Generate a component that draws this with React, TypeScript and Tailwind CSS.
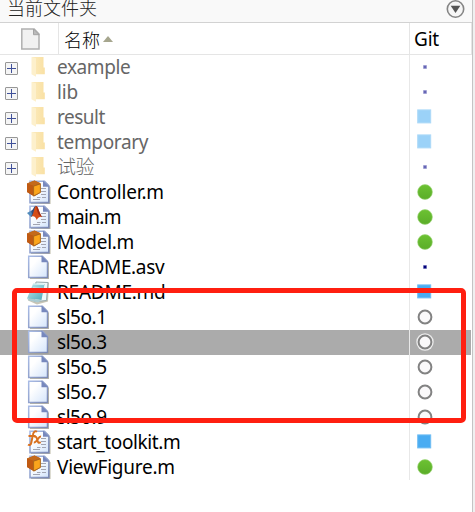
import React from 'react';

type Kind = 'folder' | 'class' | 'matlab' | 'blank' | 'note' | 'fx';
type Git = 'dot' | 'square' | 'green' | 'ring';
type Row = { name: string; kind: Kind; git: Git; tracking: string; selected?: boolean };

const rows: Row[] = [
  { name: 'example', kind: 'folder', git: 'dot', tracking: 'tracking-[-0.4px]' },
  { name: 'lib', kind: 'folder', git: 'dot', tracking: 'tracking-[-0.1px]' },
  { name: 'result', kind: 'folder', git: 'square', tracking: 'tracking-[-0.5px]' },
  { name: 'temporary', kind: 'folder', git: 'square', tracking: 'tracking-[-0.35px]' },
  { name: '试验', kind: 'folder', git: 'dot', tracking: 'tracking-[-0.5px] font-light' },
  { name: 'Controller.m', kind: 'class', git: 'green', tracking: 'tracking-[-0.2px]' },
  { name: 'main.m', kind: 'matlab', git: 'green', tracking: 'tracking-[-0.7px]' },
  { name: 'Model.m', kind: 'class', git: 'green', tracking: 'tracking-[-0.25px]' },
  { name: 'README.asv', kind: 'blank', git: 'dot', tracking: 'tracking-[-0.35px]' },
  { name: 'README.md', kind: 'note', git: 'square', tracking: 'tracking-[-0.25px]' },
  { name: 'sl5o.1', kind: 'blank', git: 'ring', tracking: 'tracking-[-0.45px]' },
  { name: 'sl5o.3', kind: 'blank', git: 'ring', tracking: 'tracking-[-0.45px]', selected: true },
  { name: 'sl5o.5', kind: 'blank', git: 'ring', tracking: 'tracking-[-0.45px]' },
  { name: 'sl5o.7', kind: 'blank', git: 'ring', tracking: 'tracking-[-0.45px]' },
  { name: 'sl5o.9', kind: 'blank', git: 'ring', tracking: 'tracking-[-0.45px]' },
  { name: 'start_toolkit.m', kind: 'fx', git: 'square', tracking: 'tracking-[-0.4px]' },
  { name: 'ViewFigure.m', kind: 'class', git: 'green', tracking: 'tracking-[-0.25px]' },
];

function Defs() {
  return (
    <svg width="0" height="0" className="absolute">
      <defs>
        <linearGradient id="paper" x1="0" y1="0" x2="1" y2="1">
          <stop offset="0.3" stopColor="#fff" />
          <stop offset="1" stopColor="#d3e4fb" />
        </linearGradient>
        <linearGradient id="edge" x1="0" y1="0" x2="1" y2="1">
          <stop offset="0" stopColor="#a9bce6" />
          <stop offset="1" stopColor="#7a88b4" />
        </linearGradient>
        <linearGradient id="fold" x1="0" y1="0" x2="1" y2="0">
          <stop offset="0" stopColor="#fcebbd" />
          <stop offset="1" stopColor="#f9e0a3" />
        </linearGradient>
        <linearGradient id="pad" x1="0" y1="0" x2="1" y2="1">
          <stop offset="0" stopColor="#c5e9ee" />
          <stop offset="1" stopColor="#4ba6b8" />
        </linearGradient>
        <linearGradient id="leaf" x1="0" y1="0" x2="0" y2="1">
          <stop offset="0" stopColor="#6cc232" />
          <stop offset="1" stopColor="#5bad29" />
        </linearGradient>
      </defs>
    </svg>
  );
}

function Page() {
  return (
    <>
      <path d="M3 3h15l4 5v16H3z" fill="#aaa68f" opacity=".8" />
      <path d="M1.7 1.2h13.8l5 5.3v16.1H1.7z" fill="url(#paper)" stroke="url(#edge)" strokeWidth="1.5" />
      <path d="M14.5 .5v6.7h6.7z" fill="#7788bd" />
    </>
  );
}

function Code() {
  return (
    <>
      <path d="M4 3h16l3.5 4.5V24H4z" fill="#aaa68f" opacity=".8" />
      <path d="M3 1.2h14.5l4.3 4.6v16.8H3z" fill="url(#paper)" stroke="url(#edge)" strokeWidth="1.6" />
      <path d="M16 .5v6.2h6.4z" fill="#7788bd" />
      <path d="M14 8.5h5M14 11.5h5M14 14.5h5M10 17.5h3.5M15 17.5h4M6 19.5h7" stroke="#a2a5b2" strokeWidth="1.2" />
    </>
  );
}

function FileIcon({ kind }: { kind: Kind }) {
  return (
    <svg width="25" height="25" viewBox="0 0 25 25" className="shrink-0">
      {kind === 'folder' && (
        <>
          <path d="M5 2h11.5v10.5h1.3v6.8H7z" fill="url(#fold)" />
          <path d="M4.5 2 9 3.3v18.4l-4.5-2.5z" fill="#fdf0cc" />
        </>
      )}
      {kind === 'blank' && <Page />}
      {kind === 'class' && (
        <>
          <Code />
          <path d="m0 3.5 7.5-3 6 2.7v9.5L7 16.5 0 12z" fill="#b65b16" />
          <path d="m0 3.5 7.5-3 6 2.7L6.5 6z" fill="#c46a1c" />
          <path d="M0 3.5 6.5 6v9.7L0 12z" fill="#c05a12" />
          <path d="m6.6 6.2 6.8-2.3v8.5l-6.8 3.6z" fill="#fba51c" stroke="#a4641c" strokeWidth=".8" />
        </>
      )}
      {kind === 'matlab' && (
        <>
          <Code />
          <path d="m0 8 4-2.3L7.5 9 4 12z" fill="#528bbb" />
          <path d="M4 5.8c2 0 3-5 5-5l-1.7 9L4 12l1-3z" fill="#344e7c" />
          <path d="M4.2 11.7C7 9.5 7 1.3 9.2 1c2 0 3 7.5 6 11-2-.7-4 .3-5.5 3C8.7 12 7 10.6 4.2 11.7z" fill="#d64d16" />
          <path d="M9.2 1c2 0 3 7.5 6 11-4-1.5-5-5-6-11z" fill="#9e2b15" />
        </>
      )}
      {kind === 'fx' && (
        <>
          <Code />
          <path d="M10 1.8C8 .4 6.4 2 6 4.5L4.3 12.5c-.5 2.6-1.8 3-3.3 2.2M1.5 6h7" fill="none" stroke="#d8701f" strokeWidth="2" />
          <path d="M7 6.8c2-1 2.7.7 3.3 3 .5 2.4 1.2 3.8 3.4 2.4M14 6.5c-2.6-.4-4 6.3-7.2 6" fill="none" stroke="#d8701f" strokeWidth="2" />
        </>
      )}
      {kind === 'note' && (
        <>
          <path d="m9 2 13 .5-1 19-11 3-9-4z" fill="#aaa68f" opacity=".65" />
          <path d="m9 2 12 .5-1.5 18-12 1.2z" fill="#eef8fa" stroke="#94a9ae" />
          <path d="M6.2 3.5 17.6 4 14.5 20 0 18.5z" fill="url(#pad)" />
          <path d="m6 4 11 .4M6 8l10.5.4" stroke="#e3fafa" />
          <path d="m0 18.5 14.5 1.5-3.3 2.5-9.4-2z" fill="#a9cbd1" />
        </>
      )}
    </svg>
  );
}

function Expander() {
  return (
    <svg width="13" height="13" viewBox="0 0 13 13" className="mt-[7px] block shrink-0">
      <rect x=".5" y=".5" width="12" height="12" rx=".5" fill="#f5f5f5" stroke="#979797" />
      <path d="M2 6h9v1H2zM6 2h1v9H6z" fill="#3f5099" />
    </svg>
  );
}

function GitMark({ git, light, selected }: { git: Git; light: boolean; selected?: boolean }) {
  return (
    <svg width="18" height="25" viewBox="0 0 18 25" className="shrink-0">
      {git === 'dot' && (
        <>
          <rect x="7" y="10" width="4" height="4" fill={light ? '#c5c5e7' : '#b0b0dd'} />
          <rect x="7.6" y="10.6" width="2.8" height="2.8" fill={light ? '#6666b5' : '#000078'} />
        </>
      )}
      {git === 'square' && (
        <rect x="1.7" y="4.9" width="13" height="13" fill={light ? '#9bd2f8' : '#49acf2'} stroke={light ? '#add9f8' : '#70bdf3'} />
      )}
      {git === 'green' && <circle cx="9" cy="12" r="7.4" fill="url(#leaf)" stroke="#a0d67c" strokeWidth=".6" />}
      {git === 'ring' && (
        <>
          {selected && <circle cx="9" cy="12" r="8.7" fill="#ededed" />}
          <circle cx="9" cy="12" r="6.4" fill="#faf9fa" stroke="#828282" strokeWidth="2" />
        </>
      )}
    </svg>
  );
}

export default function App() {
  return (
    <div className="relative flex h-[512px] w-[475px] overflow-hidden bg-white font-['Noto_Sans','Noto_Sans_CJK_SC',sans-serif] text-[19px] text-black">
      <Defs />
      <div className="flex w-[472px] shrink-0 flex-col">
        <header className="flex h-[23px] shrink-0 items-start border-b border-[#d2d2d2] bg-[#f9f9f9] pl-[7px] pr-[7px]">
          <span className="font-['Noto_Sans_CJK_SC',sans-serif] text-[18px] font-light leading-[14px] text-[#222]">当前文件夹</span>
          <svg width="19" height="19" viewBox="0 0 19 19" className="ml-auto">
            <circle cx="9.5" cy="9" r="8.2" fill="#f6f6f6" stroke="#858585" strokeWidth="1.6" />
            <path d="M4.7 5.8h9.6L9.5 13z" fill="#555" />
          </svg>
        </header>
        <div className="flex h-8 shrink-0 border-b border-[#e5e5e5]">
          <div className="flex w-[59px] items-center border-r border-[#e5e5e5] pl-[21px]">
            <svg width="19" height="22" viewBox="0 0 19 22">
              <path d="M.8 1h12.4l4.8 5v15H.8z" fill="#f1f1f1" stroke="#b0b0b0" strokeWidth="1.5" />
              <path d="M12.5 1v5.7h5.6z" fill="#bbb" stroke="#a3a3a3" />
            </svg>
          </div>
          <div className="flex flex-1 items-center pl-[5px]">
            <span className="font-['Noto_Sans_CJK_SC',sans-serif] text-[18px] font-light leading-7 text-black">名称</span>
            <svg width="10" height="6" viewBox="0 0 10 6" className="ml-[3px]"><path d="M0 6 5 0l5 6z" fill="#a6a68e" /></svg>
          </div>
          <div className="flex w-[63px] items-center border-l border-r border-[#e5e5e5] pl-1 pt-[2px]">
            <span className="tracking-[-0.2px]">Git</span>
          </div>
        </div>
        <main className="flex flex-col">
          {rows.map((r) => {
            const folder = r.kind === 'folder';
            return (
              <div key={r.name} className={`flex h-[25px] w-[471px] ${r.selected ? 'bg-[#ababab]' : ''}`}>
                <div className="flex w-[27px] items-start pl-[5px]">{folder && <Expander />}</div>
                <FileIcon kind={r.kind} />
                <div className={`flex-1 whitespace-nowrap pl-[5px] leading-[25px] ${r.tracking} ${folder ? 'text-[#666]' : 'text-black'}`}>{r.name}</div>
                <div className="flex w-[62px] border-l border-[#e8e8e8] pl-[6px]">
                  <GitMark git={r.git} light={folder} selected={r.selected} />
                </div>
              </div>
            );
          })}
        </main>
      </div>
      <div className="flex-1 border-l border-[#c4c4c4] bg-[#f0f0f0]" />
      <div className="absolute left-[12px] top-[288px] h-[135px] w-[454px] rounded-[5px] border-[5px] border-[#ff1f10]" />
    </div>
  );
}
